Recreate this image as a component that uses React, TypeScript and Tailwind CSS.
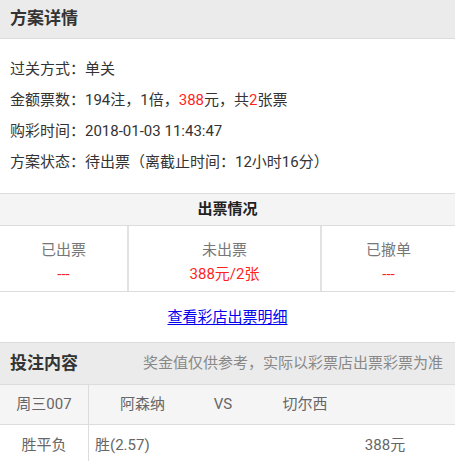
import React from "react";

const font = { fontFamily: "Roboto, 'Noto Sans CJK SC', sans-serif" };

export default function App() {
  return (
    <div
      className="w-[455px] h-[461px] overflow-hidden bg-white text-[#333] [text-spacing-trim:space-all]"
      style={font}
    >
      <div className="h-[39px] bg-[#ebebeb] border-b border-[#dcdcdc] px-[10px] flex items-center text-[17px] font-bold text-[#333]">
        方案详情
      </div>
      <div className="pt-[15px] pb-[15px] px-[10px] text-[15px] leading-[31px] text-[#333]">
        <div>过关方式：单关</div>
        <div>
          金额票数：194注，1倍，<span className="text-[#ff1f1f]">388</span>元，共
          <span className="text-[#ff1f1f]">2</span>张票
        </div>
        <div>购彩时间：2018-01-03 11:43:47</div>
        <div>方案状态：待出票（离截止时间：12小时16分）</div>
      </div>
      <div className="border-t border-[#dcdcdc] h-[33px] bg-[#f4f4f4] border-b flex items-center justify-center text-[15px] font-bold text-[#222]">
        出票情况
      </div>
      <div className="flex h-[66px] border-b border-[#dcdcdc] text-[15px]">
        <div className="w-[129px] border-r-2 border-[#e2e2e2] flex flex-col items-center pt-[12px]">
          <div className="text-[#777] leading-[24px]">已出票</div>
          <div className="text-[#ff1f1f] leading-[24px]">---</div>
        </div>
        <div className="w-[193px] border-r-2 border-[#e2e2e2] flex flex-col items-center pt-[12px]">
          <div className="text-[#777] leading-[24px]">未出票</div>
          <div className="text-[#ff1f1f] leading-[24px]">388元/2张</div>
        </div>
        <div className="flex-1 flex flex-col items-center pt-[12px]">
          <div className="text-[#777] leading-[24px]">已撤单</div>
          <div className="text-[#ff1f1f] leading-[24px]">---</div>
        </div>
      </div>
      <div className="h-[51px] flex items-center justify-center border-b border-[#dcdcdc]">
        <span className="text-[15px] text-[#0000ee] underline underline-offset-2">
          查看彩店出票明细
        </span>
      </div>
      <div className="h-[42px] bg-[#ebebeb] border-b border-[#dcdcdc] flex items-center justify-between pl-[10px] pr-[12px]">
        <span className="text-[17px] font-bold text-[#333]">投注内容</span>
        <span className="text-[15px] text-[#888]">
          奖金值仅供参考，实际以彩票店出票彩票为准
        </span>
      </div>
      <div className="flex h-[40px] bg-[#f5f5f5] border-b border-[#dcdcdc] text-[15px] text-[#666]">
        <div className="w-[89px] border-r border-[#dcdcdc] flex items-center justify-center">
          周三007
        </div>
        <div className="w-[107px] flex items-center justify-center">阿森纳</div>
        <div className="w-[54px] flex items-center justify-center">VS</div>
        <div className="w-[110px] flex items-center justify-center">切尔西</div>
      </div>
      <div className="flex h-[40px] text-[15px] text-[#666]">
        <div className="w-[89px] border-r border-[#dcdcdc] flex items-center justify-center">
          胜平负
        </div>
        <div className="w-[271px] flex items-center pl-[6px]">胜(2.57)</div>
        <div className="w-[50px] flex items-center justify-center">388元</div>
      </div>
    </div>
  );
}
